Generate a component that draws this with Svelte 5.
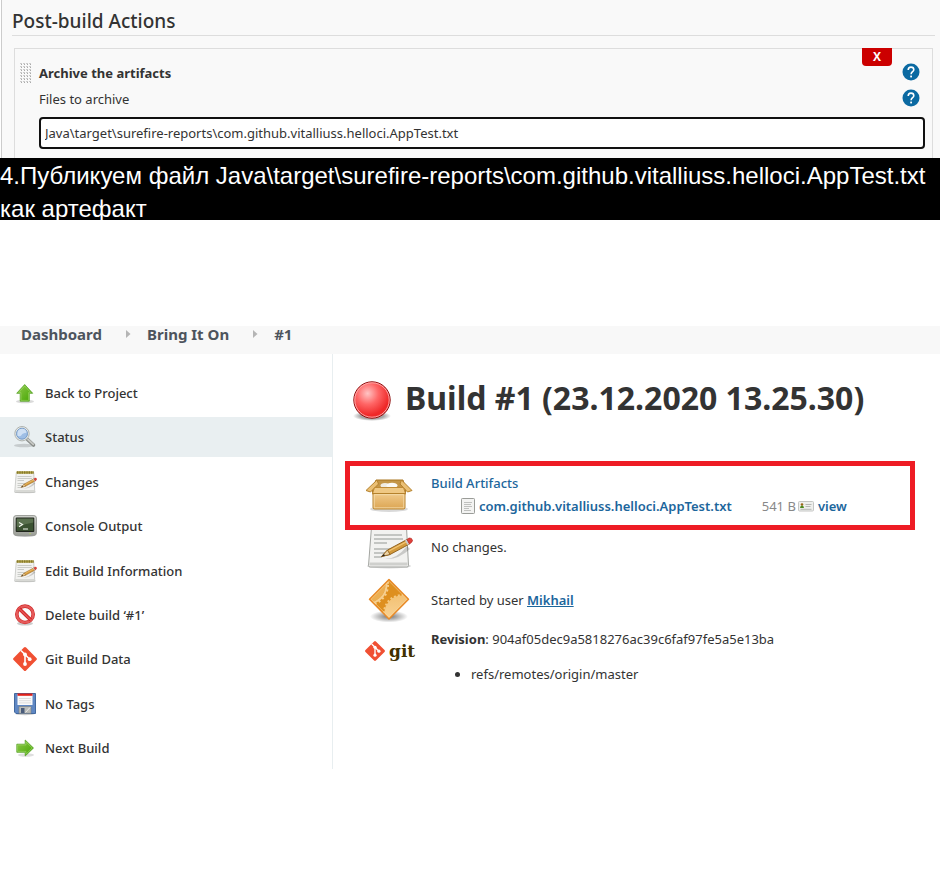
<script>
  const crumbs = ['Dashboard', 'Bring It On', '#1'];
  const tasks = [
    { icon: 'up', label: 'Back to Project' },
    { icon: 'search', label: 'Status', active: true },
    { icon: 'notepad', label: 'Changes' },
    { icon: 'terminal', label: 'Console Output' },
    { icon: 'notepad', label: 'Edit Build Information' },
    { icon: 'delete', label: 'Delete build ‘#1’' },
    { icon: 'git', label: 'Git Build Data' },
    { icon: 'save', label: 'No Tags' },
    { icon: 'next', label: 'Next Build' }
  ];
  let files = $state('Java\\target\\surefire-reports\\com.github.vitalliuss.helloci.AppTest.txt');
</script>

{#snippet help(name)}
  <button class="help" type="button" aria-label={name}>
    <svg width="18" height="18" viewBox="0 0 18 18">
      <circle cx="9" cy="9" r="8.5" fill="#0b6aa2" />
      <path d="M6.2 7.1C6.2 5.2 7.3 4.1 9 4.1s2.800 1.100 2.800 2.600c0 1.900-2.700 2.200-2.700 4.500" fill="none" stroke="#fff" stroke-width="1.6" />
      <rect x="8.2" y="12.6" width="1.8" height="1.8" fill="#fff" />
    </svg>
  </button>
{/snippet}

{#snippet notepad(size)}
  <svg width={size} height={size} viewBox="0 0 48 48">
    <ellipse cx="24" cy="44" rx="22" ry="2.5" fill="#000" opacity=".15" />
    <path d="M6.500 5h35l2 38.500q0 1.500-1.500 1.500h-37q-1.500 0-1.500-1.500z" fill="#f2f2f0" stroke="#a3a5a1" />
    <path d="M4.500 40.500h38v3h-38z" fill="#cfd0cd" />
    <path d="M7 2.500h34v5H7z" fill="#b3a548" />
    <path d="M8 5h33" stroke="#776a20" stroke-width="5" stroke-dasharray="1.500 2" />
    <path d="M9 13h28M9 17h29M9 21h13M9 27h19M9 31h13M9 35h8" stroke="#b4b6b2" stroke-width="1.300" />
    <path d="M20 37q12 0 22-13l3 3q-12 11-25 10z" fill="#000" opacity=".17" />
    <path d="M16.500 34.500l6-6.500L42 17.500l2.500 4.500-19.500 10.500z" fill="#d39a3c" stroke="#8a5a16" stroke-width=".9" />
    <path d="M23 29.500l18-9.500" stroke="#f3c676" stroke-width="1.300" />
    <path d="M16.500 34.500l6-6.500 2.500 4.500z" fill="#ecd3a5" stroke="#8a5a16" stroke-width=".8" />
    <path d="M16.500 34.500l2.500-2.500 1 1.800z" fill="#222" />
    <path d="M40 18.500l2-1 2.500 4.500-2 1z" fill="#ccc" />
    <path d="M42 17.500l2-1.500q3-.5 3.500 2.500 0 1.500-3 3.500z" fill="#e0403a" stroke="#b32a24" stroke-width=".7" />
  </svg>
{/snippet}

{#snippet gitmark(size)}
  <svg width={size} height={size} viewBox="0 0 24 24">
    <path d="M10.900.6q1.100-1.100 2.200 0l10.300 10.300q1.100 1.100 0 2.200L13.100 23.400q-1.100 1.100-2.200 0L.6 13.100q-1.100-1.100 0-2.200z" fill="#f05033" />
    <path d="M8 3.500l4 4M12 8v9M12.500 8l4 4" fill="none" stroke="#fff" stroke-width="1.600" />
    <circle cx="12" cy="7.500" r="1.900" fill="#fff" />
    <circle cx="12" cy="17" r="1.900" fill="#fff" />
    <circle cx="16.700" cy="12.200" r="1.900" fill="#fff" />
  </svg>
{/snippet}

{#snippet taskIcon(name)}
  {#if name === 'notepad'}
    {@render notepad(24)}
  {:else if name === 'git'}
    {@render gitmark(24)}
  {:else}
    <svg width="24" height="24" viewBox="0 0 24 24">
      <defs>
        <linearGradient id="green-{name}" x1="0" y1="0" x2="1" y2="1">
          <stop offset="0" stop-color="#8fc94c" />
          <stop offset="1" stop-color="#43a500" />
        </linearGradient>
        <linearGradient id="steel-{name}" x1="0" y1="0" x2="0" y2="1">
          <stop offset="0" stop-color="#d5d7d2" />
          <stop offset="1" stop-color="#9b9e97" />
        </linearGradient>
      </defs>
      {#if name === 'up'}
        <ellipse cx="12" cy="20.500" rx="9" ry="1.800" fill="#000" opacity=".15" />
        <path d="M11.700 3.500l8 8.800h-3.400v7.900H7.200v-7.900H3.700z" fill="url(#green-up)" stroke="#5aa52c" stroke-width=".8" />
        <path d="M11.700 5l6 6.600h-2.200v7.800H8v-7.800H5.700z" fill="none" stroke="#b6e57f" stroke-width=".6" opacity=".7" />
      {:else if name === 'next'}
        <ellipse cx="13" cy="19" rx="8" ry="1.800" fill="#000" opacity=".13" />
        <path d="M20.500 12l-8.300 8v-3.700H3.800V8.200h8.400V4z" fill="url(#green-next)" stroke="#5aa52c" stroke-width=".8" />
        <path d="M19 12l-6 5.900v-2.500H4.600V9h8.400V6z" fill="none" stroke="#b6e57f" stroke-width=".6" opacity=".7" />
      {:else if name === 'search'}
        <ellipse cx="11" cy="20.500" rx="10" ry="1.800" fill="#000" opacity=".15" />
        <path d="M14.500 14.500l6 5.500" stroke="#888b88" stroke-width="3.600" stroke-linecap="round" />
        <path d="M15 14.500l5.300 4.900" stroke="#c7c9c5" stroke-width="1.800" stroke-linecap="round" />
        <circle cx="9" cy="8.700" r="7.200" fill="#e8ebe8" stroke="#a8aba8" stroke-width=".9" />
        <circle cx="9" cy="8.700" r="5.500" fill="#9ebee5" stroke="#6d93c2" stroke-width=".9" />
        <path d="M4.300 9q0-5.200 5-5.200 4 .2 4.300 4-4 .2-5 2.200-1.400 2-4.100.8z" fill="#dbe8f7" opacity=".8" />
      {:else if name === 'terminal'}
        <ellipse cx="12" cy="21.500" rx="10" ry="1.500" fill="#000" opacity=".25" />
        <rect x=".6" y="1.600" width="22.800" height="19.800" rx="2.500" fill="url(#steel-terminal)" stroke="#989a95" />
        <rect x="2.700" y="3.600" width="18.600" height="14.300" rx="1" fill="#20251d" />
        <rect x="3.700" y="4.600" width="16.600" height="12.300" fill="#3b5232" />
        <path d="M3.700 4.600h16.600v4q-8 1-16.600 4.500z" fill="#6b8260" opacity=".65" />
        <path d="M6 8.500l3.500 2L6 12.800M10 15h5" fill="none" stroke="#f1f5ed" stroke-width="1.200" />
        <circle cx="17" cy="19.600" r=".7" fill="#bada49" />
      {:else if name === 'delete'}
        <ellipse cx="12" cy="20.500" rx="8" ry="2" fill="#000" opacity=".2" />
        <circle cx="12" cy="11.300" r="8.200" fill="#fafafa" stroke="#cf2b2b" stroke-width="3.600" />
        <circle cx="12" cy="11.300" r="8.200" fill="none" stroke="#e65a5a" stroke-width="2.200" />
        <path d="M6.300 5.700l11.500 11.400" stroke="#cf2525" stroke-width="3.500" />
        <path d="M6.300 5.700l11.500 11.400" stroke="#e65252" stroke-width="1.500" />
      {:else if name === 'save'}
        <ellipse cx="12" cy="21.800" rx="10" ry="1.500" fill="#000" opacity=".2" />
        <path d="M1.500 1.500h21v20H3l-1.500-1.500z" fill="#5f87c3" stroke="#42699f" />
        <path d="M4.500 2h15v11h-15z" fill="#fafafa" />
        <path d="M4.500 1.500h15v2.300h-15z" fill="#e02018" />
        <path d="M6 6.500h12M6 8.700h12M6 10.900h12" stroke="#d6d6d6" stroke-width=".8" />
        <path d="M6 14.500h12v6.800H6z" fill="#b9bbb8" stroke="#7d807c" stroke-width=".6" />
        <path d="M8 16h3.500v5H8z" fill="#4a5c7b" />
        <path d="M12.500 20.500l4.500-5" stroke="#e9e9e9" />
      {/if}
    </svg>
  {/if}
{/snippet}

<div class="page">
  <section class="config">
    <h2>Post-build Actions</h2>
    <div class="step">
      <svg class="grip" width="12" height="21" viewBox="0 0 12 21">
        <defs>
          <pattern id="dots" width="3" height="3" patternUnits="userSpaceOnUse">
            <rect width="2" height="1" fill="#ccc" />
            <rect x="1" y="1" width="1" height="1" fill="#aaa" />
          </pattern>
        </defs>
        <rect width="12" height="21" fill="url(#dots)" />
      </svg>
      <button class="remove" type="button">X</button>
      <div class="line">
        <strong>Archive the artifacts</strong>
        {@render help('Help for Archive the artifacts')}
      </div>
      <div class="line">
        <label for="files">Files to archive</label>
        {@render help('Help for Files to archive')}
      </div>
      <input id="files" type="text" bind:value={files} />
    </div>
  </section>

  <p class="caption">4.Публикуем файл Java\target\surefire-reports\com.github.vitalliuss.helloci.AppTest.txt как артефакт</p>

  <nav class="crumbs" aria-label="Breadcrumb">
    {#each crumbs as crumb, i}
      {#if i > 0}
        <svg width="5" height="8" viewBox="0 0 5 8"><path d="M0 0l4.500 4L0 8z" fill="#b5b5b5" /></svg>
      {/if}
      <a href="#top">{crumb}</a>
    {/each}
  </nav>

  <div class="body">
    <nav class="tasks" aria-label="Tasks">
      {#each tasks as task}
        <a href="#task" class:active={task.active}>
          {@render taskIcon(task.icon)}
          <span>{task.label}</span>
        </a>
      {/each}
    </nav>

    <main>
      <h1>
        <svg width="40" height="44" viewBox="0 0 40 44">
          <defs>
            <radialGradient id="ball" cx=".38" cy=".32" r=".6">
              <stop offset="0" stop-color="#ffc4c4" />
              <stop offset=".5" stop-color="#f66" />
              <stop offset="1" stop-color="#ef2929" />
            </radialGradient>
            <radialGradient id="ball-shade">
              <stop offset=".6" stop-color="#000" stop-opacity=".35" />
              <stop offset="1" stop-color="#000" stop-opacity="0" />
            </radialGradient>
          </defs>
          <ellipse cx="19" cy="37" rx="19" ry="5" fill="url(#ball-shade)" />
          <circle cx="19" cy="21" r="18.200" fill="url(#ball)" stroke="#8c1010" />
          <circle cx="19" cy="21" r="17.200" fill="none" stroke="#ffb0b0" stroke-width=".9" />
        </svg>
        <span>Build #1 (23.12.2020 13.25.30)</span>
      </h1>

      <section class="row artifacts">
        <svg width="48" height="48" viewBox="0 0 48 48">
          <defs>
            <linearGradient id="card" x1="0" y1="0" x2="0" y2="1">
              <stop offset="0" stop-color="#f0c98a" />
              <stop offset="1" stop-color="#dca552" />
            </linearGradient>
          </defs>
          <ellipse cx="24" cy="38" rx="19" ry="3" fill="#000" opacity=".15" />
          <path d="M11 9h27l2.500 9v5h-33v-5z" fill="#c49648" stroke="#aa7621" />
          <ellipse cx="20" cy="14.500" rx="4.500" ry="2.500" fill="#f0ece2" />
          <ellipse cx="27" cy="14.500" rx="5.500" ry="2.800" fill="#fbf9f4" />
          <path d="M12 9L1 19.500l4.500 1.500L13.500 13zM36.500 9l10.500 10.500-4.500 1.500L35 13z" fill="#eabf74" stroke="#b5812c" />
          <path d="M9.500 16.500h29l2 6h-33z" fill="#efc884" stroke="#c08b35" />
          <path d="M8 22.500h32V36.500q0 1.500-1.500 1.500h-29Q8 38 8 36.500z" fill="url(#card)" stroke="#b5812c" />
          <path d="M9.200 23.700h29.600v13.100H9.200z" fill="none" stroke="#f8e0b2" opacity=".8" />
        </svg>
        <div class="files">
          <a href="#artifacts">Build Artifacts</a>
          <div class="file">
            <svg width="14" height="16" viewBox="0 0 14 16">
              <rect x=".5" y=".5" width="13" height="15" rx=".8" fill="#f3f3f2" stroke="#9a9c98" />
              <path d="M3 4.500h8M3 6.500h7M3 8.500h8M3 10.500h5M3 12.500h7" stroke="#b9bab8" stroke-width=".9" />
            </svg>
            <a class="name" href="#file">com.github.vitalliuss.helloci.AppTest.txt</a>
            <span class="size">
              541 B
              <svg width="16" height="12" viewBox="0 0 16 12">
                <rect x=".5" y="1.500" width="15" height="9.500" rx="1" fill="#eeefed" stroke="#c5c6c4" />
                <circle cx="4" cy="4.500" r="1.300" fill="#9b6417" />
                <path d="M2 8q0-2.500 2-2.500T6 8z" fill="#4e8a1d" />
                <path d="M7.500 4.500h6M7.500 6.500h5M2.500 9.300h11" stroke="#a6a8a5" stroke-width=".8" />
              </svg>
            </span>
            <a class="name" href="#view">view</a>
          </div>
        </div>
      </section>

      <section class="row changes">
        <span class="clip">{@render notepad(48)}</span>
        <p>No changes.</p>
      </section>

      <section class="row cause">
        <svg width="48" height="48" viewBox="0 0 48 48">
          <defs>
            <radialGradient id="soft">
              <stop offset="0" stop-color="#000" stop-opacity=".55" />
              <stop offset="1" stop-color="#000" stop-opacity="0" />
            </radialGradient>
            <linearGradient id="gear" x1="0" y1="0" x2="0" y2="1">
              <stop offset="0" stop-color="#f3c173" />
              <stop offset="1" stop-color="#fbdba6" />
            </linearGradient>
            <clipPath id="gem"><path d="M24 3.500l19.500 19.700L24 43 4.500 23.200z" /></clipPath>
          </defs>
          <ellipse cx="24" cy="40.500" rx="19" ry="6" fill="url(#soft)" />
          <path d="M24 3.500l19.500 19.700L24 43 4.500 23.200z" fill="#de8f1f" />
          <g clip-path="url(#gem)">
            <circle cx="3" cy="9" r="17.500" fill="#ecaf53" />
            <circle cx="3" cy="9" r="18.500" fill="none" stroke="#f6cf90" stroke-width="2" />
            <circle cx="3" cy="9" r="20" fill="none" stroke="#f6cf90" stroke-width="2" stroke-dasharray="2 2.500" />
            <circle cx="37" cy="37" r="17.500" fill="url(#gear)" />
            <circle cx="37" cy="37" r="18" fill="none" stroke="#f5c880" stroke-width="2" stroke-dasharray="2 2" />
          </g>
          <path d="M24 5.200l18 18L24 41.300 6 23.200z" fill="none" stroke="#fbd99f" opacity=".6" />
          <path d="M24 3.500l19.500 19.700L24 43 4.500 23.200z" fill="none" stroke="#e88a28" stroke-width="1.500" stroke-linejoin="round" />
        </svg>
        <p>Started by user <a class="user" href="#user">Mikhail</a></p>
      </section>

      <section class="row revision">
        <span class="logo">{@render gitmark(20)}<b>git</b></span>
        <div>
          <p><strong>Revision</strong>: 904af05dec9a5818276ac39c6faf97fe5a5e13ba</p>
          <ul><li>refs/remotes/origin/master</li></ul>
        </div>
      </section>
    </main>
  </div>
</div>

<style>
  :global(body) {
    margin: 0;
    background: #fff;
  }
  .page {
    color: #333;
    font: 13px/20px "Noto Sans", "Open Sans", sans-serif;
  }
  svg {
    display: block;
    flex: none;
  }
  h1, h2, p, ul {
    margin: 0;
  }
  a {
    color: #1c669c;
    text-decoration: none;
  }
  button {
    border: 0;
    padding: 0;
    cursor: pointer;
  }

  .config {
    margin-left: 1px;
    padding: 7px 5px 0 10px;
    border-left: 1px solid #ccc;
    background: #f9f9f9;
  }
  h2 {
    border-bottom: 1px solid #ddd;
    font-size: 19px;
    line-height: 28px;
    font-weight: 500;
  }
  .step {
    position: relative;
    margin: 12px 2px 0;
    padding: 11px 7px 9px 24px;
    border: 1px solid #ddd;
    border-bottom: 0;
  }
  .grip {
    position: absolute;
    left: 5px;
    top: 14px;
  }
  .remove {
    position: absolute;
    top: -1px;
    right: 40px;
    width: 30px;
    height: 18px;
    border-radius: 0 0 4px 4px;
    background: #c00;
    color: #fff;
    font: bold 12px/18px "Open Sans", sans-serif;
  }
  .line {
    display: flex;
    align-items: center;
    justify-content: space-between;
    height: 26px;
    padding-right: 5px;
  }
  .help {
    margin-bottom: 2px;
    background: none;
  }
  input {
    box-sizing: border-box;
    display: block;
    width: 100%;
    height: 32px;
    margin-top: 5px;
    padding: 0 4px;
    border: 2px solid #111;
    border-radius: 4px;
    background: #fff;
    color: #333;
    font: inherit;
    outline: 0;
  }

  .caption {
    box-sizing: border-box;
    height: 62px;
    padding-top: 1px;
    background: #000;
    color: #fff;
    font: 24px/33px "Liberation Sans", Arial, sans-serif;
  }

  .crumbs {
    display: flex;
    align-items: center;
    box-sizing: border-box;
    height: 28px;
    margin-top: 106px;
    padding: 0 21px 12px;
    background: #f8f8f8;
  }
  .crumbs svg {
    margin: 0 16px 0 24px;
  }
  .crumbs a {
    color: #4d545d;
    font-size: 15px;
    font-weight: 700;
  }

  .body {
    display: flex;
    align-items: flex-start;
  }
  .tasks {
    box-sizing: border-box;
    display: flex;
    flex: 0 0 333px;
    flex-direction: column;
    justify-content: space-between;
    min-height: 415px;
    padding: 19px 0 1px;
    border-right: 1px solid #e8eef0;
  }
  .tasks a {
    display: flex;
    align-items: center;
    gap: 8px;
    height: 40px;
    padding-left: 13px;
    color: #333;
    font-weight: 500;
  }
  .tasks a.active {
    background: #e9eff1;
  }

  main {
    flex: 1;
    padding: 22px 25px 0 12px;
  }
  h1 {
    display: flex;
    align-items: flex-start;
    gap: 12px;
    height: 48px;
    padding-left: 8px;
    font-size: 32px;
    line-height: 44px;
  }
  h1 svg {
    margin-top: 3px;
  }
  .row {
    display: flex;
    gap: 18px;
    padding-left: 20px;
  }
  .artifacts {
    box-sizing: border-box;
    height: 69px;
    margin-top: 37px;
    padding: 5px 0 0 15px;
    border: 5px solid #ee1c24;
  }
  .files {
    padding-top: 2px;
    font-weight: 500;
  }
  .file {
    display: flex;
    align-items: center;
    gap: 4px;
    margin: 3px 0 0 30px;
  }
  .name {
    font-weight: 600;
  }
  .size {
    display: flex;
    align-items: center;
    gap: 2px;
    margin-left: 26px;
    color: #888;
    font-weight: 400;
  }
  .changes {
    height: 42px;
  }
  .clip {
    display: flex;
    align-items: flex-end;
    height: 40px;
    overflow: hidden;
  }
  .changes p {
    padding-top: 7px;
  }
  .cause {
    align-items: center;
    margin-top: 4px;
  }
  .user {
    font-weight: 600;
    text-decoration: underline;
  }
  .revision {
    margin-top: 5px;
  }
  .logo {
    display: flex;
    align-items: center;
    gap: 4px;
    width: 48px;
    height: 44px;
    color: #413000;
    font: bold 17px/24px "DejaVu Serif", serif;
  }
  .revision ul {
    margin-top: 15px;
    padding-left: 40px;
  }
</style>
